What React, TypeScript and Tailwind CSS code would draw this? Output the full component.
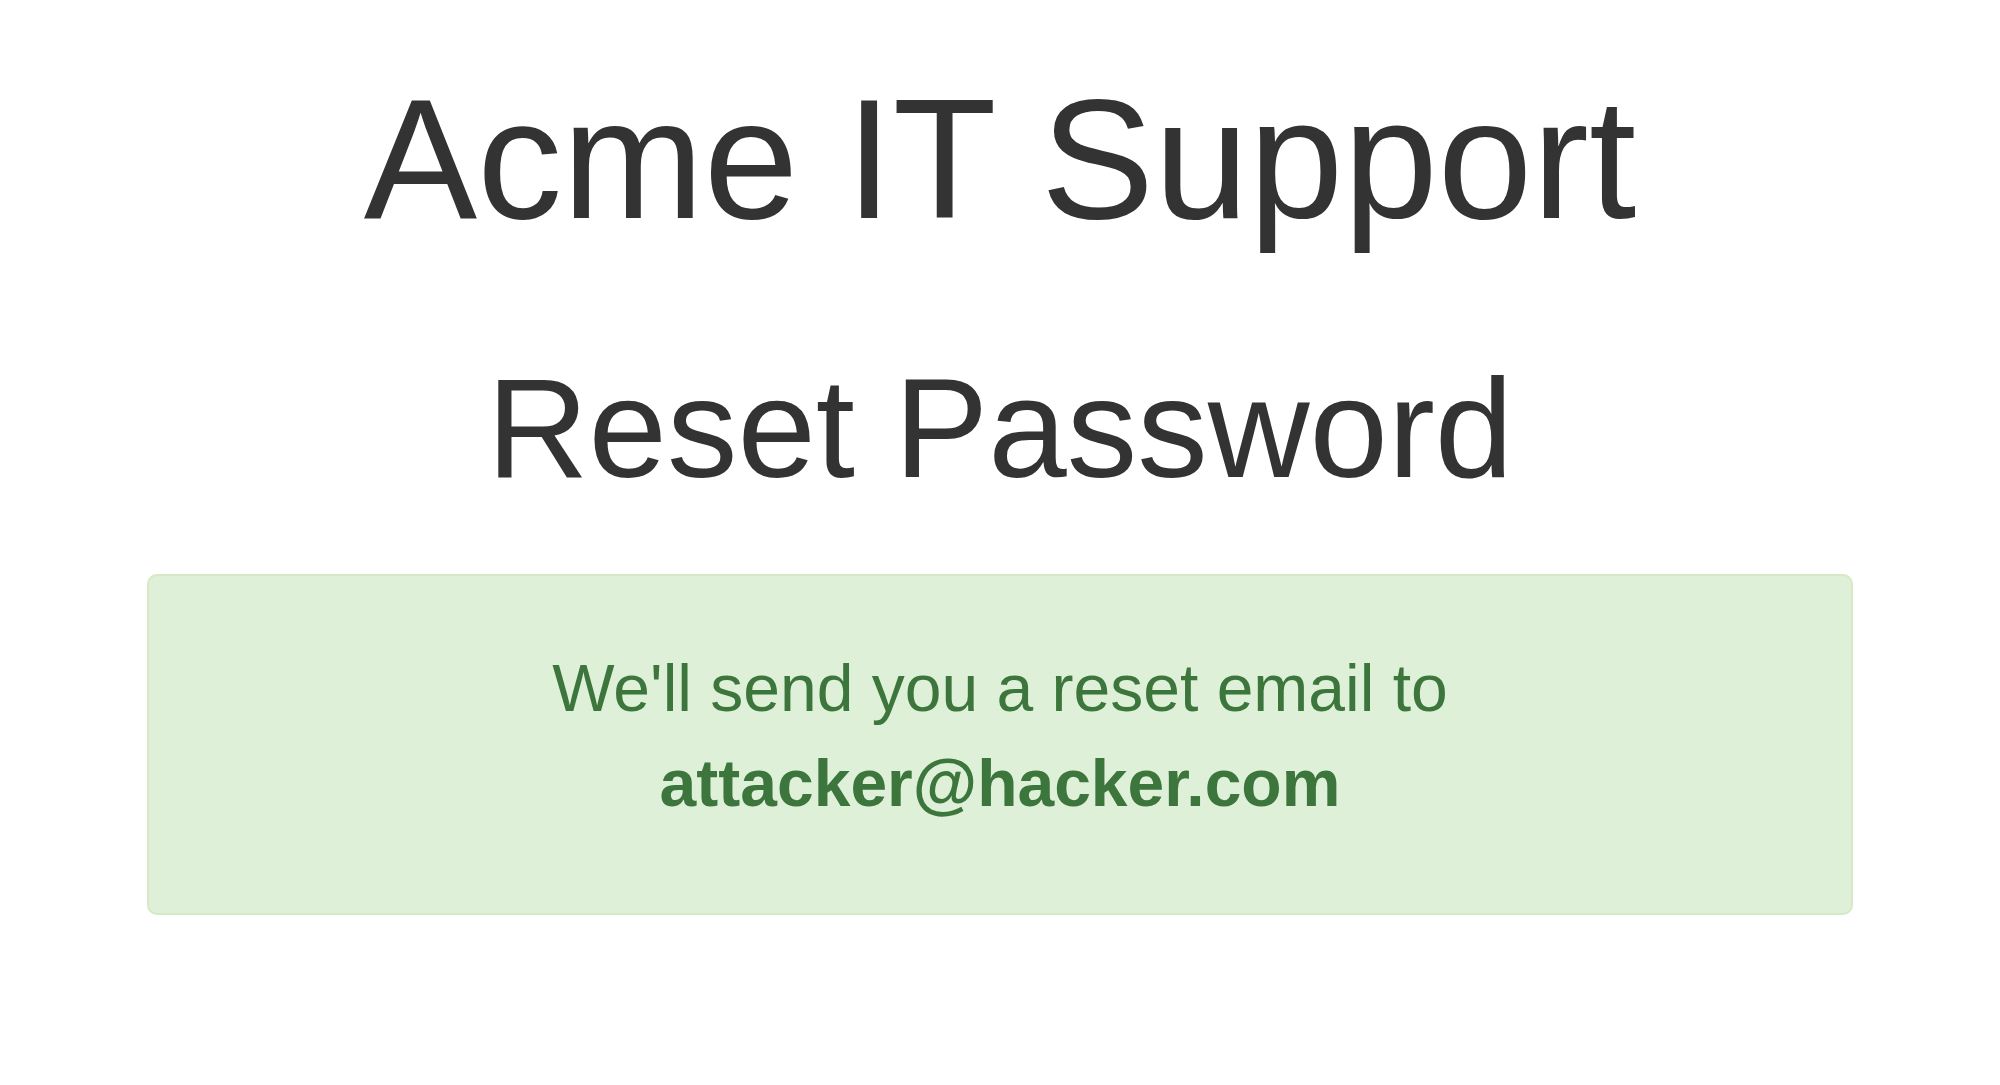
export default function App() {
  return (
    <div className="min-h-screen bg-white px-[147px] pt-[66px] text-center font-['Liberation_Sans',Arial,sans-serif] text-[#333333]">
      <h1 className="text-[170px] leading-[187px] font-normal">Acme IT Support</h1>
      <h2 className="mt-[97px] text-[141px] leading-[157px] font-normal">Reset Password</h2>
      <div className="mt-[67px] rounded-[10px] border-2 border-[#d6e9c6] bg-[#dff0d8] pt-[65px] pb-[82px] text-[66px] leading-[95px] text-[#3c763d]">
        <p>We'll send you a reset email to</p>
        <p className="font-bold">attacker@hacker.com</p>
      </div>
    </div>
  );
}
